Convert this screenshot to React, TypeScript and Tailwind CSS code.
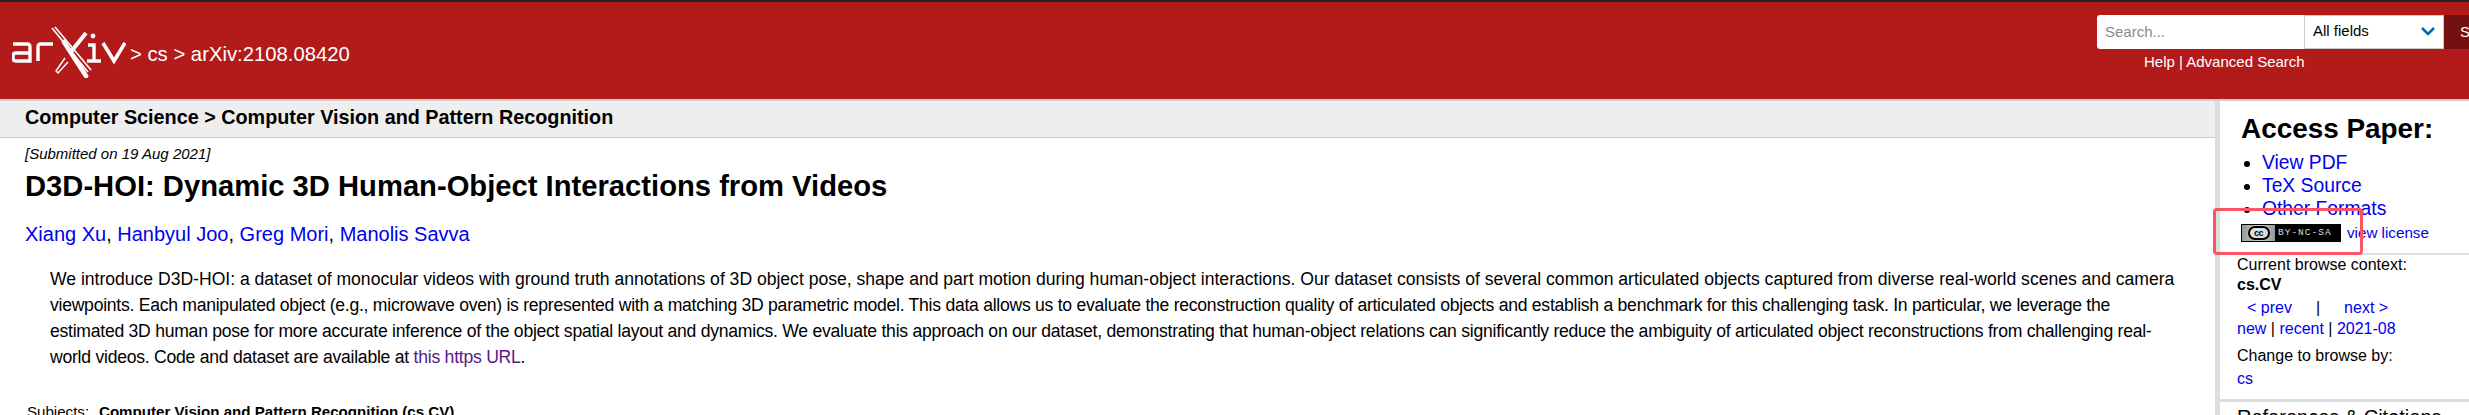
const authors = ["Xiang Xu", "Hanbyul Joo", "Greg Mori", "Manolis Savva"];

const ArxivLogo = () => (
  <svg width="114" height="52" viewBox="0 0 114 52" className="block shrink-0" fill="none" stroke="#fff">
    {/* a */}
    <path d="M1 18 H15 Q18 18 18 21 V35 H4 Q1 35 1 32 V30 Q1 27 4 27 H18" strokeWidth="3.4" />
    {/* r */}
    <path d="M26 35 V21 Q26 18 29 18 H41" strokeWidth="3.4" />
    {/* X */}
    <path d="M40 2 L76 46" strokeWidth="1.6" />
    <path d="M43 1 L79 44" strokeWidth="1.6" />
    <path d="M52 16 L74 50" strokeWidth="4.6" strokeLinecap="round" />
    <path d="M74 7 L58 27" strokeWidth="4" />
    <path d="M53 32 L44 45 L46 47 L56 36" strokeWidth="1.4" />
    {/* i */}
    <circle cx="81" cy="10" r="2.4" fill="#fff" stroke="none" />
    <path d="M76 19 H82 V35 M75 35 H89" strokeWidth="3.4" />
    {/* v */}
    <path d="M91 17 L102 35 L113 17" strokeWidth="3.6" />
  </svg>
);

const CcBadge = () => (
  <div className="flex h-[18px] w-[100px] shrink-0 items-center border border-black bg-black">
    <div className="flex h-full w-[33px] items-center justify-center bg-gradient-to-r from-[#999] via-[#ccc] to-[#999]">
      <span className="flex h-[14px] w-[22px] items-center justify-center rounded-full border-2 border-black bg-[#ddd] font-['Liberation_Sans',sans-serif] text-[9px] font-bold leading-none tracking-[-0.5px] text-black">
        cc
      </span>
    </div>
    <span className="flex-1 pl-[3px] font-['Liberation_Mono',monospace] text-[9.5px] leading-none tracking-[1px] text-[#ddd]">
      BY-NC-SA
    </span>
  </div>
);

export default function App() {
  return (
    <div className="relative flex h-screen flex-col overflow-hidden bg-white font-['Liberation_Sans',Arial,sans-serif] text-black">
      {/* header */}
      <header className="flex h-[101px] shrink-0 justify-between border-t-2 border-b-2 border-t-[#222] border-b-[#ccc] bg-[#b31b1b] pt-[13px]">
        <div className="flex items-start pl-[12px] pt-[11px] text-white">
          <ArxivLogo />
          <span className="ml-[4px] mt-[16px] text-[20.3px] leading-[24px]">&gt; cs &gt; arXiv:2108.08420</span>
        </div>
        <div className="flex w-[372px] shrink-0 flex-col">
          <div className="flex h-[34px]">
            <div className="flex w-[207px] items-center rounded-l-[3px] bg-white pl-[8px] text-[15px] text-[#8a8a8a]">
              Search...
            </div>
            <div className="flex w-[140px] items-center justify-between border border-[#ccc] bg-white pb-[2px] pl-[8px] pr-[8px] text-[15px]">
              All fields
              <svg width="14" height="9" viewBox="0 0 14 9" fill="none" stroke="#0068ac" strokeWidth="2.6">
                <path d="M1 1 L7 7 L13 1" />
              </svg>
            </div>
            <div className="flex-1 overflow-hidden bg-[#751010] pl-[16px] text-[15px] leading-[34px] text-white">
              S
            </div>
          </div>
          <div className="mt-[3px] pl-[47px] text-[15px] leading-[20px] text-white">Help | Advanced Search</div>
        </div>
      </header>

      <div className="flex min-h-0 flex-1">
        {/* main column */}
        <main className="min-w-0 flex-1">
          <div className="flex h-[37px] items-center border-b border-[#ccc] bg-[#eee] pb-[3px] pl-[25px] text-[19.8px] font-bold">
            Computer Science &gt; Computer Vision and Pattern Recognition
          </div>
          <div className="pl-[25px] pr-[40px]">
            <p className="mt-[6px] text-[15px] italic leading-[20px]">[Submitted on 19 Aug 2021]</p>
            <h1 className="mt-[5px] text-[29.2px] font-bold leading-[34px]">
              D3D-HOI: Dynamic 3D Human-Object Interactions from Videos
            </h1>
            <p className="mt-[18px] text-[20px] leading-[26px]">
              {authors.map((name, i) => (
                <span key={name}>
                  <a className="text-[#0000ee]">{name}</a>
                  {i < authors.length - 1 && ", "}
                </span>
              ))}
            </p>
            <div className="mt-[19px] whitespace-nowrap pl-[25px] text-[17.6px] leading-[26px]">
              <p className="tracking-[-0.02px]">
                We introduce D3D-HOI: a dataset of monocular videos with ground truth annotations of 3D object pose,
                shape and part motion during human-object interactions. Our dataset consists of several common
                articulated objects captured from diverse real-world scenes and camera
              </p>
              <p className="tracking-[-0.27px]">
                viewpoints. Each manipulated object (e.g., microwave oven) is represented with a matching 3D parametric
                model. This data allows us to evaluate the reconstruction quality of articulated objects and establish a
                benchmark for this challenging task. In particular, we leverage the
              </p>
              <p className="tracking-[-0.26px]">
                estimated 3D human pose for more accurate inference of the object spatial layout and dynamics. We
                evaluate this approach on our dataset, demonstrating that human-object relations can significantly
                reduce the ambiguity of articulated object reconstructions from challenging real-
              </p>
              <p className="tracking-[-0.25px]">
                world videos. Code and dataset are available at <a className="text-[#551a8b]">this https URL</a>.
              </p>
            </div>
            <div className="mt-[32px] flex pl-[2px] text-[15.1px] leading-[20px]">
              <span className="w-[72px]">Subjects:</span>
              <span className="font-bold">Computer Vision and Pattern Recognition (cs.CV)</span>
            </div>
          </div>
        </main>

        {/* sidebar */}
        <aside className="w-[254px] shrink-0 border-l-[5px] border-[#ddd]">
          <div className="pl-[21px] pt-[12px]">
            <h2 className="text-[27.9px] font-bold leading-[32px]">Access Paper:</h2>
            <ul className="mt-[6px] list-disc pl-[21px] text-[19.3px] leading-[23px] text-[#0000ee] marker:text-black">
              <li>View PDF</li>
              <li>TeX Source</li>
              <li>Other Formats</li>
            </ul>
            <div className="mt-[2px] flex items-center gap-[6px] text-[15.2px] leading-[22px] text-[#0000ee]">
              <CcBadge />
              view license
            </div>
          </div>
          <div className="mt-[9px] border-t-2 border-[#ddd] pl-[17px] text-[16px]">
            <p className="leading-[20px]">Current browse context:</p>
            <p className="font-bold leading-[19px]">cs.CV</p>
            <p className="mt-[3px] leading-[22px] text-[#0000ee]">
              <span className="ml-[10px]">&lt; prev</span>
              <span className="mx-[24px] text-black">|</span>
              <span>next &gt;</span>
            </p>
            <p className="leading-[20px] text-[#0000ee]">
              new <span className="text-black">|</span> recent <span className="text-black">|</span> 2021-08
            </p>
            <p className="mt-[7px] leading-[20px]">Change to browse by:</p>
            <p className="mt-[3px] leading-[20px] text-[#0000ee]">cs</p>
          </div>
          <div className="mt-[10px] border-t-[3px] border-[#ddd] pl-[17px] pt-[3px] text-[20px] leading-[24px]">
            References &amp; Citations
          </div>
        </aside>
      </div>

      {/* annotation drawn over the screenshot */}
      <div className="absolute left-[2213px] top-[208px] h-[47px] w-[150px] rounded-[4px] border-[3px] border-[#fb5468]" />
    </div>
  );
}
